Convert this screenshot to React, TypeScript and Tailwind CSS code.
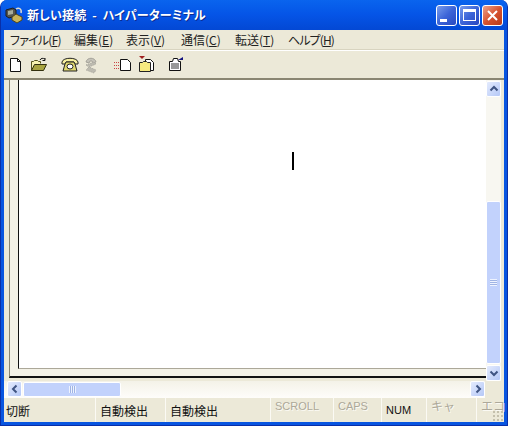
import React from "react";

const jp = { fontFamily: '"Noto Sans CJK JP", "Liberation Sans", sans-serif' };
const latin = { fontFamily: '"Liberation Sans", sans-serif' };

const Page = () => (
  <svg width="16" height="16" viewBox="0 0 16 16">
    <path d="M2.500 1.500h7l3 3v10h-10z" fill="#fff" stroke="#111" />
    <path d="M9.500 1.500v3h3" fill="none" stroke="#111" />
  </svg>
);

const Open = () => (
  <svg width="18" height="16" viewBox="0 0 18 16">
    <path d="M1.500 13.500v-9h2l1-1h3l1 1h2v2" fill="#f8f4b0" stroke="#55531c" />
    <path d="M1.500 13.500l3-6h12l-3 6z" fill="#a8a440" stroke="#33310f" />
    <path d="M10 3c1-2 3-2 5-1M15 1v2.500h-2.500" fill="none" stroke="#111" />
  </svg>
);

const Phone = () => (
  <svg width="18" height="15" viewBox="0 0 18 15">
    <path d="M1 5c1-5 15-5 16 0v2h-4V5H5v2H1z" fill="#f7f0a0" stroke="#222" />
    <path d="M4 7l1-2h8l1 2 2 7H2z" fill="#e0d870" stroke="#222" />
    <ellipse cx="9" cy="9.500" rx="3" ry="2.500" fill="#fff" stroke="#222" />
  </svg>
);

const PhoneDim = () => (
  <svg width="16" height="18" viewBox="0 0 16 18">
    <path d="M3 6c1-5 9-5 10 0l-3 1-1-2H7L6 7z" fill="#c4c2b8" stroke="#a5a39a" />
    <path d="M3 9l8-3 2 2-7 3 7 3-2 3-8-3 3-3z" fill="#bdbbb0" stroke="#a5a39a" strokeDasharray="1 1" />
  </svg>
);

const Sheet = () => (
  <svg width="20" height="16" viewBox="0 0 20 16">
    <g fill="#c44">
      <rect x="1" y="5" width="1" height="1" />
      <rect x="3" y="5" width="1" height="1" />
      <rect x="5" y="5" width="1" height="1" />
      <rect x="1" y="8" width="1" height="1" />
      <rect x="3" y="8" width="1" height="1" />
      <rect x="5" y="8" width="1" height="1" />
      <rect x="1" y="11" width="1" height="1" />
      <rect x="3" y="11" width="1" height="1" />
      <rect x="5" y="11" width="1" height="1" />
    </g>
    <path d="M7.500 2.500h7l3 3v8h-10z" fill="#fff" stroke="#111" />
  </svg>
);

const FolderPair = () => (
  <svg width="17" height="18" viewBox="0 0 17 18">
    <path d="M1 0h6l-3 3z" fill="#a02020" />
    <path d="M7.500 3.500h5l3 3v8h-8z" fill="#fff" stroke="#111" />
    <path d="M1.500 15.500v-9h3l1-1h3l1 1h3v9z" fill="#f6ea80" stroke="#222" />
  </svg>
);

const Props = () => (
  <svg width="18" height="17" viewBox="0 0 18 17">
    <path d="M2.500 5.500h3l1-3h4l1 3h2v9h-11z" fill="#fff" stroke="#111" />
    <path d="M4 8h8M4 10h8M4 12h8" stroke="#333" />
    <path d="M11 4l5-3v3z" fill="#151580" />
  </svg>
);

const Computer = () => (
  <svg width="18" height="18" viewBox="0 0 18 18">
    <path d="M1 4l7-2 3 2v6l-7 2-3-2z" fill="#55554c" stroke="#1c1c1c" />
    <path d="M3 5l5-1v4l-5 1z" fill="#a9ae9c" />
    <path d="M7 11l4-3 6 3v3l-5 3-5-3z" fill="#c9b45a" stroke="#4d4620" />
    <path d="M11 3c3-2 6 0 5 4" fill="none" stroke="#dcdcd0" strokeWidth="1.500" />
  </svg>
);

type Dir = "up" | "down" | "left" | "right";

const Chevron = ({ dir }: { dir: Dir }) => {
  const d = {
    up: "M1.500 6.500l3.500-3.500 3.500 3.500",
    down: "M1.500 3.500l3.500 3.500 3.500-3.500",
    left: "M6.500 1.500l-3.500 3.500 3.500 3.500",
    right: "M3.500 1.500l3.500 3.500-3.500 3.500",
  }[dir];
  return (
    <svg width="10" height="10" viewBox="0 0 10 10">
      <path d={d} fill="none" stroke="#3f5482" strokeWidth="2" />
    </svg>
  );
};

const ScrollBtn = ({ dir }: { dir: Dir }) => (
  <div className="flex h-[16px] w-[15px] shrink-0 items-center justify-center rounded-[2px] border border-white bg-gradient-to-br from-[#e4ebfd] to-[#b5c8f7]">
    <Chevron dir={dir} />
  </div>
);

const WinBtn = ({ close, children }: { close?: boolean; children: React.ReactNode }) => (
  <div
    className={
      close
        ? "flex h-[21px] w-[21px] items-center justify-center rounded-[3px] border border-white bg-gradient-to-br from-[#e8a08a] via-[#d8532f] to-[#b93a18]"
        : "flex h-[21px] w-[21px] items-center justify-center rounded-[3px] border border-white bg-gradient-to-br from-[#7a9ceb] via-[#3c64d8] to-[#2848c0]"
    }
  >
    {children}
  </div>
);

const Panel = ({ w, dim, children }: { w: string; dim?: boolean; children: React.ReactNode }) => (
  <div
    className={`${w} flex shrink-0 border-r border-[#fbfaf4] ${
      dim ? "text-[#aca899] [text-shadow:1px_1px_#fbfaf4]" : "text-[#111]"
    }`}
  >
    {children}
  </div>
);

const menus = [
  { label: "ファイル", key: "F", w: "w-[64px] tracking-[-0.8px]" },
  { label: "編集", key: "E", w: "w-[52px]" },
  { label: "表示", key: "V", w: "w-[55px]" },
  { label: "通信", key: "C", w: "w-[54px]" },
  { label: "転送", key: "T", w: "w-[53px]" },
  { label: "ヘルプ", key: "H", w: "w-[50px] tracking-[-0.9px]" },
];

export default function App() {
  return (
    <div
      className="flex h-[426px] w-[508px] flex-col overflow-hidden rounded-t-[7px] border-x border-b border-[#0a2fa8] bg-[#0855e0] text-[12px]"
      style={jp}
    >
      {/* title bar */}
      <div className="flex h-[30px] shrink-0 items-center bg-gradient-to-b from-[#0a64ee] via-[#0554e6] to-[#0348d4] pr-[4px] pl-[4px]">
        <Computer />
        <span className="ml-[4px] text-[12px] leading-none font-bold tracking-[0.2px] whitespace-pre text-white [font-feature-settings:'palt'] [text-shadow:1px_1px_#0b2a90]">
          {"新しい接続  -  ハイパーターミナル"}
        </span>
        <div className="ml-auto flex gap-[2px]">
          <WinBtn>
            <div className="mt-[10px] mr-[6px] h-[3px] w-[7px] bg-white" />
          </WinBtn>
          <WinBtn>
            <div className="h-[12px] w-[13px] border border-t-[3px] border-white" />
          </WinBtn>
          <WinBtn close>
            <svg width="13" height="13" viewBox="0 0 13 13">
              <path d="M2 2l9 9M11 2l-9 9" stroke="#fff" strokeWidth="2" />
            </svg>
          </WinBtn>
        </div>
      </div>

      <div className="mx-[3px] mb-[3px] flex min-h-0 grow flex-col bg-[#ece9d8]">
        {/* menu */}
        <div className="flex h-[20px] shrink-0 items-center border-b border-[#d8d4c0] pl-[6px] text-[#222] [font-feature-settings:'palt']">
          {menus.map((m) => (
            <span key={m.key} className={`${m.w} shrink-0 leading-none whitespace-nowrap`}>
              {m.label}(<span className="underline">{m.key}</span>)
            </span>
          ))}
        </div>

        {/* toolbar */}
        <div className="flex h-[30px] shrink-0 items-center border-t border-b-2 border-t-white border-b-[#8a8672] pl-[4px]">
          <Page />
          <div className="ml-[6px]">
            <Open />
          </div>
          <div className="ml-[13px]">
            <Phone />
          </div>
          <div className="ml-[4px]">
            <PhoneDim />
          </div>
          <div className="ml-[14px]">
            <Sheet />
          </div>
          <div className="ml-[5px]">
            <FolderPair />
          </div>
          <div className="ml-[12px]">
            <Props />
          </div>
        </div>

        {/* terminal */}
        <div className="flex min-h-0 grow">
          <div className="flex min-w-0 grow pb-[3px] pl-[5px]">
            <div className="flex min-w-0 grow border-b-2 border-l border-b-[#111] border-l-[#8a8672]">
              <div className="w-[8px] shrink-0 bg-[#f3f1e6]" />
              <div className="flex min-w-0 grow flex-col">
                <div className="relative grow border-b border-l border-b-[#aca899] border-l-[#111] bg-white">
                  <div className="absolute top-[72px] left-[273px] h-[18px] w-[2px] bg-black" />
                </div>
                <div className="h-[7px] shrink-0 bg-[#f3f1e6]" />
              </div>
            </div>
          </div>
          <div className="flex w-[15px] shrink-0 flex-col bg-[#f8f7f1] pt-[1px]">
            <ScrollBtn dir="up" />
            <div className="h-[104px] shrink-0" />
            <div className="mb-[1px] flex grow items-center justify-center rounded-[2px] border border-white bg-[#c2d2fc]">
              <div className="h-[7px] w-[7px] bg-[repeating-linear-gradient(to_bottom,#eef3ff_0,#eef3ff_1px,#a0b4e4_1px,#a0b4e4_2px)]" />
            </div>
            <ScrollBtn dir="down" />
          </div>
          <div className="w-[3px] shrink-0" />
        </div>

        {/* horizontal scrollbar */}
        <div className="flex h-[17px] shrink-0">
          <div className="flex grow items-end bg-gradient-to-b from-[#f4f2e8] to-[#fefdfa] pb-[1px] pl-[3px]">
            <ScrollBtn dir="left" />
            <div className="ml-[1px] flex h-[15px] w-[98px] items-center justify-center rounded-[2px] border border-white bg-[#c2d2fc]">
              <div className="h-[7px] w-[7px] bg-[repeating-linear-gradient(to_right,#eef3ff_0,#eef3ff_1px,#a0b4e4_1px,#a0b4e4_2px)]" />
            </div>
            <div className="grow" />
            <ScrollBtn dir="right" />
          </div>
          <div className="w-[19px] shrink-0" />
        </div>

        {/* status bar */}
        <div className="relative flex h-[24px] shrink-0 items-stretch text-[12px] leading-[22px]">
          <Panel w="w-[92px]">
            <span className="mt-[2px] pl-[2px]">切断</span>
          </Panel>
          <Panel w="w-[70px]">
            <span className="mt-[2px] pl-[4px]">自動検出</span>
          </Panel>
          <Panel w="w-[105px]">
            <span className="mt-[2px] pl-[4px]">自動検出</span>
          </Panel>
          <Panel w="w-[63px]" dim>
            <span className="-mt-[3px] pl-[4px] text-[11px]" style={latin}>
              SCROLL
            </span>
          </Panel>
          <Panel w="w-[48px]" dim>
            <span className="-mt-[3px] pl-[4px] text-[11px]" style={latin}>
              CAPS
            </span>
          </Panel>
          <Panel w="w-[45px]">
            <span className="mt-[1px] pl-[4px] text-[11px]" style={latin}>
              NUM
            </span>
          </Panel>
          <Panel w="w-[50px]" dim>
            <span className="-mt-[3px] pl-[4px]">キャ</span>
          </Panel>
          <div className="flex grow pl-[4px] whitespace-nowrap text-[#aca899] [text-shadow:1px_1px_#fbfaf4]">
            <span className="-mt-[3px]">エコ</span>
          </div>
          <div className="absolute right-[1px] bottom-[1px] h-[11px] w-[11px] bg-[radial-gradient(circle,#c4c0ac_1px,transparent_1px)] bg-[length:4px_4px]" />
        </div>
      </div>
    </div>
  );
}
